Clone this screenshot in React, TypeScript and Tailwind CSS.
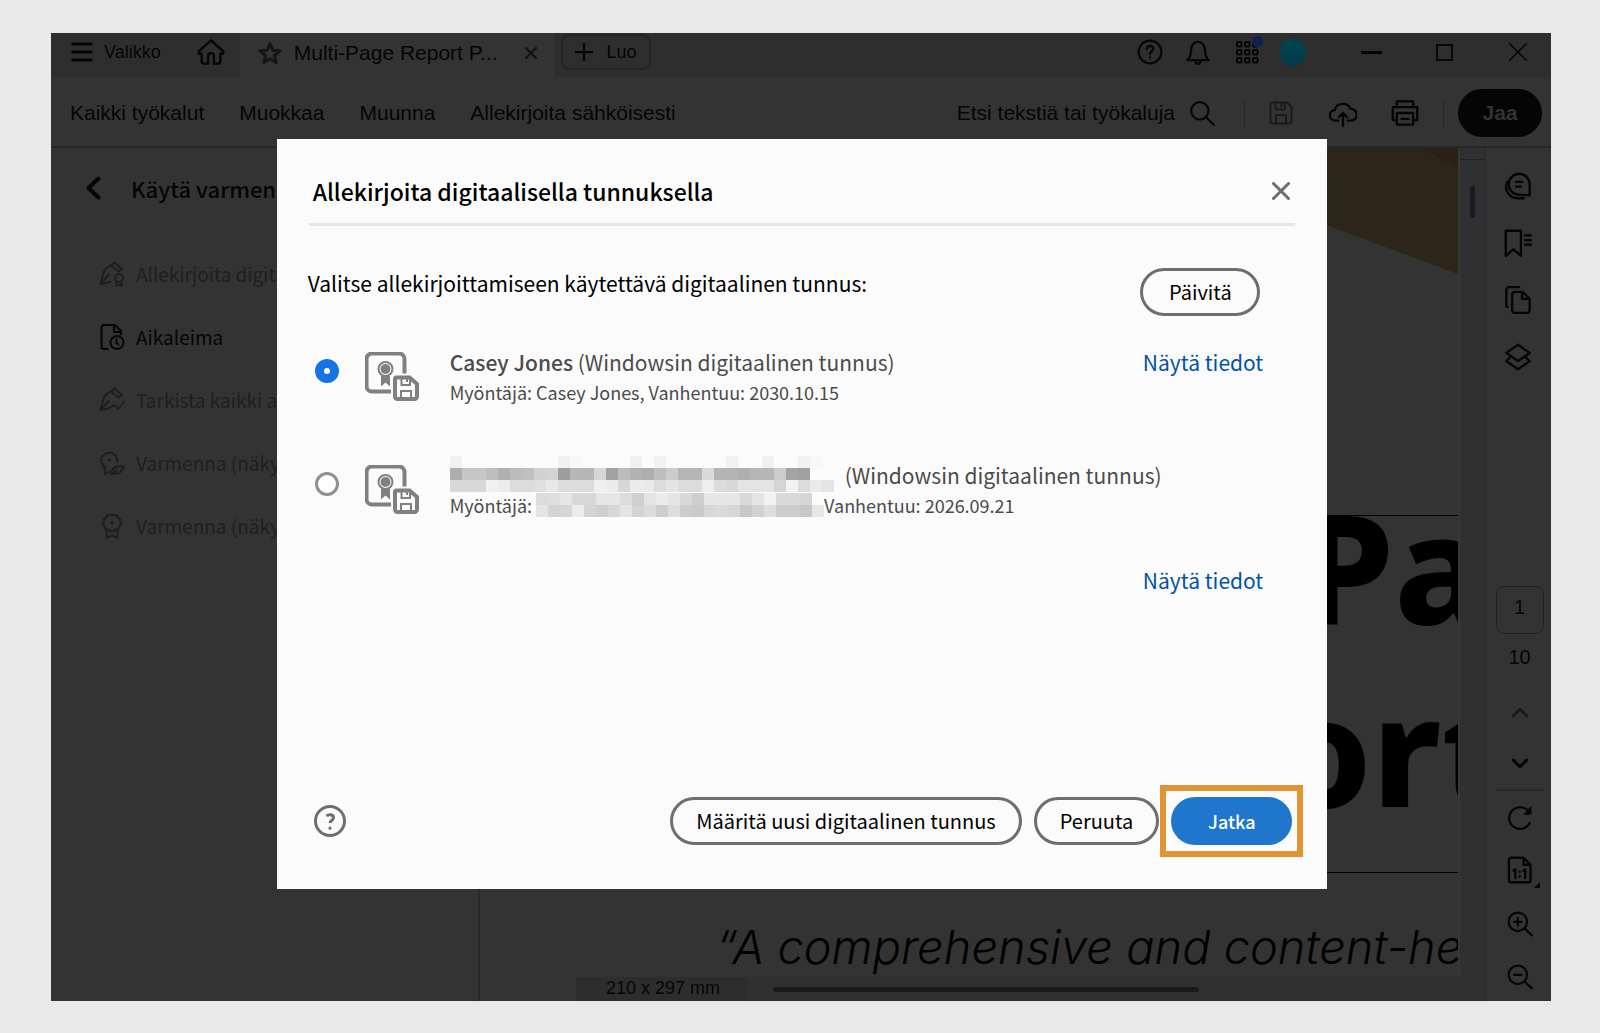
import React from "react";
import clsx from "clsx";

// ─── Icons ───────────────────────────────────────────────────

interface IconProps {
  className?: string;
  width?: number;
  box?: number;
  children: React.ReactNode;
}

function Icon({ className, width = 2, box = 24, children }: IconProps) {
  return (
    <svg
      viewBox={`0 0 ${box} ${box}`}
      fill="none"
      stroke="currentColor"
      strokeWidth={width}
      strokeLinecap="round"
      strokeLinejoin="round"
      aria-hidden="true"
      className={clsx("shrink-0", className)}
    >
      {children}
    </svg>
  );
}

const penBody = (
  <>
    <path d="M12 4.500 15.500 1.500 23 8l-3 2.500z" />
    <path d="M12 4.500C8 6 5.500 8 4.500 12L1.500 22.500" />
    <path d="M1.500 23 9.500 14" />
  </>
);

function SignIcon() {
  return (
    <Icon box={26} className="size-[26px]">
      {penBody}
      <path d="M1.500 23 11.500 21" />
      <circle cx="20" cy="17" r="4" />
      <path d="M17.500 20.500v4.500l2.500-1.500 2.500 1.500v-4.500" />
    </Icon>
  );
}

function TimestampIcon() {
  return (
    <Icon box={26} className="size-[26px]">
      <path d="M8.500 25H5a2.500 2.500 0 0 1-2.500-2.500v-19A2.500 2.500 0 0 1 5 1h11l6 6v3.500" />
      <path d="M15 1.500V8h6.500" />
      <circle cx="18" cy="18.500" r="6.500" />
      <path d="M17.500 15v4l2 1.500" />
    </Icon>
  );
}

function VerifyIcon() {
  return (
    <Icon box={26} className="size-[26px]">
      {penBody}
      <path d="M1.500 23c6-.5 10-1.500 12.500-4.500" />
      <path d="m15.500 18.500 3.500 3.500 6-7.500" />
    </Icon>
  );
}

function CertifyVisibleIcon() {
  return (
    <Icon box={26} className="size-[26px]">
      <path d="M6 17.500c-2 0-2.500-2-2-3.500-2-.5-2.500-3-1-4.500C1.500 7.500 3 5.500 5 5.500 5.500 3 8 2.500 9.500 3.500 11.500 1.500 14 2.500 14.500 4.500c2.500 0 3.500 2 2.500 4 1.500.500 2 2.500 1 3.500" />
      <path d="M6 16v8l4.500-2" />
      <circle cx="10.500" cy="10" r="1.500" fill="currentColor" stroke="none" />
      <path d="M12.500 23.500c0-5 4.500-8 12.500-7.500-1.500 5-5.500 9-10.500 7.500z" />
      <path d="m12.500 24.500 5.500-4.500" />
    </Icon>
  );
}

function CertifyIcon() {
  return (
    <Icon box={26} className="size-[26px]">
      <path d="M13 1.500l2.400 1.200 2.700-.2 1.100 2.400 2.200 1.500-.2 2.700 1 2.400-1.800 2-.8 2.500-2.700.5-2 1.700-1.900-.9-1.900.9-2-1.700-2.700-.5-.8-2.500-1.800-2 1-2.400-.2-2.700 2.200-1.500 1.100-2.400 2.700.2z" />
      <path d="M7.500 18v7l5.500-2.500 5.500 2.500v-7" />
      <circle cx="13" cy="10" r="2" fill="currentColor" stroke="none" />
    </Icon>
  );
}

function SaveIcon({ className }: { className?: string }) {
  return (
    <Icon className={className}>
      <path d="M3.500 1.500H18L22.500 6v14a2.500 2.500 0 0 1-2.500 2.500H4A2.500 2.500 0 0 1 1.500 20V3.500a2 2 0 0 1 2-2z" />
      <path d="M6.500 1.500V8.500h9.500v-7" />
      <path d="M12.500 3.500v2" />
      <path d="M7 22v-8h10v8" />
    </Icon>
  );
}

function DigitalIdIcon() {
  return (
    <svg viewBox="0 0 54 49" aria-hidden="true" className="h-[49px] w-[54px] shrink-0">
      <g fill="none" stroke="#808080">
        <path
          d="M26 39.500H7A5.500 5.500 0 0 1 1.500 34V7A5.500 5.500 0 0 1 7 1.500h27A5.500 5.500 0 0 1 39.500 7v14.500"
          strokeWidth="4"
        />
        <circle cx="20.500" cy="17" r="7" strokeWidth="2" />
        <path
          d="M31.500 25.500h13L52 32v12.500a2.500 2.500 0 0 1-2.500 2.500H32.500a2.500 2.500 0 0 1-2.500-2.500v-17.500a1.500 1.500 0 0 1 1.500-1.500z"
          strokeWidth="4"
        />
        <path d="M36.500 25v8h8.500v-8M36 46.500v-7.500h10v7.500" strokeWidth="2" />
        <path d="M42 26v4" strokeWidth="2" />
      </g>
      <circle cx="20.500" cy="17" r="5" fill="#808080" />
      <path d="M16 24h9v10.500l-4.500-4-4.500 4z" fill="#808080" />
    </svg>
  );
}

// ─── Data ────────────────────────────────────────────────────

const menuItems = ["Kaikki työkalut", "Muokkaa", "Muunna", "Allekirjoita sähköisesti"];

const tools = [
  { label: "Allekirjoita digitaalisesti", icon: <SignIcon />, enabled: false },
  { label: "Aikaleima", icon: <TimestampIcon />, enabled: true },
  { label: "Tarkista kaikki allekirjoitukset", icon: <VerifyIcon />, enabled: false },
  { label: "Varmenna (näkyvä allekirjoitus)", icon: <CertifyVisibleIcon />, enabled: false },
  { label: "Varmenna (näkymätön allekirjoitus)", icon: <CertifyIcon />, enabled: false },
];

// Grey levels of the pixelated name and issuer, one row of 12px cells per array
const nameCells = [
  "f0 fb fb fb fb fb fb fb fb f0 f8 fb fb fb fb f0 fb f2 fb fb fb fb fb f2 fb fb f0 fb fb f2 f8 fb".split(" "),
  "ae c6 c6 be b0 bc c0 d2 d4 9e b6 b6 d6 a2 bc b2 ae be cc b6 b6 da b4 b4 b0 b6 b6 cc a4 a0 fb fb".split(" "),
  "d8 d8 d8 f0 ec dc dc e0 e8 dc dc dc f0 ec d8 ec ea dc e4 dc dc ee dc d8 e4 e4 e4 d4 f2 dc ea e4".split(" "),
];

const issuerCells = [
  "dc de e6 d8 d8 e6 e6 dc cf e4 ec e4 d8 ce e6 e6 e6 da e4 f2 da da d6 fb".split(" "),
  "e4 d4 d6 ec d4 cf d8 e4 d4 dc ce de cc ca d8 da d8 c8 d2 de cc cc c8 e8".split(" "),
];

function Redacted({ rows, label }: { rows: string[][]; label: string }) {
  return (
    <span role="img" aria-label={label} className="flex flex-col">
      {rows.map((row, i) => (
        <span key={i} className="flex">
          {row.map((level, j) => (
            <span
              key={j}
              className="block h-3 w-3"
              style={{ backgroundColor: `#${level}${level}${level}` }}
            />
          ))}
        </span>
      ))}
    </span>
  );
}

// ─── Window chrome ───────────────────────────────────────────

function TabBar() {
  return (
    <header className="flex h-11 shrink-0 items-center bg-[#2e2e2e] pb-1.5">
      <button className="ml-[19px] flex items-center gap-[10px] text-lg leading-6">
        <Icon width={3} className="size-6">
          <path d="M1.500 4h21M1.500 12h21M1.500 20h21" strokeLinecap="butt" />
        </Icon>
        Valikko
      </button>
      <button className="ml-9" aria-label="Koti">
        <Icon width={2} className="size-7">
          <path d="M12 2 1.500 11.500v2H4V20a2 2 0 0 0 2 2h3.500v-6.500a2.500 2.500 0 0 1 5 0V22H18a2 2 0 0 0 2-2v-6.500h2.500v-2z" />
        </Icon>
      </button>
      <div className="ml-[15px] flex h-11 items-center self-start bg-[#333] pr-[18px] pb-1 pl-[18px]">
        <Icon width={3} className="size-6 text-[#151515]">
          <path d="m12 2.500 2.800 6.700 7.200.6-5.500 4.700 1.700 7L12 17.700 5.800 21.500l1.700-7L2 9.800l7.200-.6z" />
        </Icon>
        <span className="ml-3 text-[21px] leading-6">Multi-Page Report P...</span>
        <button className="ml-[27px]" aria-label="Sulje välilehti">
          <Icon width={4} className="size-3 text-[#111]">
            <path d="m2 2 20 20M22 2 2 22" />
          </Icon>
        </button>
      </div>
      <button className="ml-1.5 flex h-9 items-center gap-[14px] rounded-lg border-2 border-[#262626] px-3 text-lg leading-6">
        <Icon width={3} className="size-[18px]">
          <path d="M12 1v22M1 12h22" />
        </Icon>
        Luo
      </button>
      <div className="ml-auto flex items-center">
        <button aria-label="Ohje">
          <Icon className="size-[26px]">
            <circle cx="12" cy="12" r="10.500" />
            <path d="M9 9.500c0-4 6-3.500 6-.5 0 2-3 2.500-3 5" />
            <path d="M12 17v.3" />
          </Icon>
        </button>
        <button className="ml-[22px]" aria-label="Ilmoitukset">
          <Icon className="size-[26px]">
            <path d="M2 19.500c3-2.500 3.500-5 3.500-9a6.500 8 0 0 1 13 0c0 4 .5 6.500 3.500 9z" />
            <path d="M9.500 20.500c.5 3 4.500 3 5 0" />
          </Icon>
        </button>
        <button className="relative ml-6" aria-label="Sovellukset">
          <Icon width={2} className="size-6">
            {[4, 12, 20].map((y) =>
              [4, 12, 20].map((x) => (
                <rect key={`${x}-${y}`} x={x - 2} y={y - 2} width="4.500" height="4.500" rx="1" />
              ))
            )}
          </Icon>
          <span className="absolute -top-1 -right-1 size-[11px] rounded-full bg-[#0c2352]" />
        </button>
        <span className="ml-5 size-[27px] rounded-full bg-linear-to-b from-[#00454f] to-[#003a4a]" />
        <button className="ml-[55px]" aria-label="Pienennä">
          <span className="block h-[3px] w-[21px] bg-[#050505]" />
        </button>
        <button className="ml-[54px]" aria-label="Suurenna">
          <span className="block size-[17px] border-2 border-[#080808]" />
        </button>
        <button className="mr-6 ml-14" aria-label="Sulje">
          <Icon width={2} className="size-[18px]">
            <path d="m1 1 22 22M23 1 1 23" />
          </Icon>
        </button>
      </div>
    </header>
  );
}

function Toolbar() {
  return (
    <nav className="flex h-[71px] shrink-0 items-center border-b-2 border-[#282828] pt-0.5 text-[21px] leading-6">
      <div className="ml-[19px] flex gap-[35px]">
        {menuItems.map((item) => (
          <button key={item}>{item}</button>
        ))}
      </div>
      <button className="ml-auto flex items-center gap-[14px]">
        Etsi tekstiä tai työkaluja
        <Icon width={2} className="size-[26px]">
          <circle cx="10" cy="10" r="8" />
          <path d="m16 16 7 7" />
        </Icon>
      </button>
      <span className="ml-[29px] h-7 w-px bg-[#262626]" />
      <button className="ml-6 text-[#1a1a1a]" aria-label="Tallenna">
        <SaveIcon className="size-6" />
      </button>
      <button className="ml-9" aria-label="Lataa pilveen">
        <Icon className="size-7">
          <path d="M8 18.500H5.500a4.500 4.500 0 0 1-.5-9 7 6.500 0 0 1 13.500-1 5 5 0 0 1 .5 10H16" />
          <path d="M12 23V12M8.500 15.500 12 12l3.500 3.500" />
        </Icon>
      </button>
      <button className="ml-[34px]" aria-label="Tulosta">
        <Icon className="size-7">
          <path d="M5 7V2h14v5" />
          <path d="M5 18H1.500V7h21v11H19" />
          <path d="M5 12h14v10H5zM9 17h6" />
        </Icon>
      </button>
      <span className="ml-6 h-7 w-px bg-[#262626]" />
      <button className="mr-[9px] ml-[14px] h-12 w-[84px] rounded-full bg-[#050505] font-bold text-[#333]">
        Jaa
      </button>
    </nav>
  );
}

function ToolsPanel() {
  return (
    <aside className="w-[429px] shrink-0 border-r-2 border-[#282828] font-['Noto_Sans_CJK_SC',sans-serif]">
      <div className="mt-6 ml-8 flex h-8 items-center">
        <button aria-label="Takaisin">
          <Icon width={4} className="size-6">
            <path d="M15.500 2.500 5.500 12l10 9.500" />
          </Icon>
        </button>
        <h2 className="ml-6 text-[22px] leading-8 font-medium whitespace-nowrap">Käytä varmennetta</h2>
      </div>
      <ul className="mt-[38px]">
        {tools.map((tool) => (
          <li key={tool.label}>
            <button
              disabled={!tool.enabled}
              className={clsx(
                "ml-12 flex h-[63px] items-center gap-[11px] text-[19px] leading-6 whitespace-nowrap",
                tool.enabled ? "text-[#050505]" : "text-[#1f1f1f]"
              )}
            >
              {tool.icon}
              {tool.label}
            </button>
          </li>
        ))}
      </ul>
    </aside>
  );
}

function DocumentView() {
  return (
    <main className="flex min-w-0 flex-1 flex-col pl-24">
      <div className="flex min-h-0 flex-1">
        <div className="flex flex-1 flex-col overflow-hidden">
          <svg viewBox="0 0 882 130" aria-hidden="true" className="w-full shrink-0">
            <path d="M0 0h882v126L750 77 500 0z" fill="#2b2619" />
            <path d="M846 0h36v21z" fill="#2b2013" />
          </svg>
          <div className="mt-[237px] h-[358px] shrink-0 border-y border-black font-['Noto_Sans',sans-serif] text-[152px] leading-[183px] font-extrabold whitespace-nowrap text-black">
            <div className="-mt-[42px] pl-[723px]">Pa</div>
            <div className="pl-[700px]">ort</div>
          </div>
          <p className="mt-11 pl-[140px] font-['Inter',sans-serif] text-[47px] leading-[60px] font-light whitespace-nowrap text-black italic">
            “A comprehensive and content-he
          </p>
        </div>
        <div className="w-[27px] shrink-0 border-l-2 border-[#373737] bg-[#303032]">
          <div className="h-3 border-b border-[#222]" />
          <div className="mx-auto mt-[26px] h-8 w-[5px] rounded-full bg-[#1b1b1f]" />
        </div>
      </div>
      <div className="flex h-6 shrink-0 items-center bg-[#303030]">
        <span className="h-6 w-[171px] bg-[#2d2d2d] pl-[30px] text-lg leading-[22px]">210 x 297 mm</span>
        <span className="ml-[26px] h-[5px] w-[426px] rounded-full bg-[#1a1a1a]" />
      </div>
    </main>
  );
}

function SideRail() {
  return (
    <aside className="flex w-[66px] shrink-0 flex-col items-center border-l border-[#282828] pl-0.5">
      <div className="mt-6 mr-[3px] flex flex-col gap-[29px]">
        <button aria-label="Kommentit">
          <Icon className="size-7">
            <path d="M22 20V10.500a9 9 0 1 0-9 9z" />
            <path d="M3 8.500c-3 5 0 14 9 14h5M10.500 8.500h5M10.500 12.500h4" />
          </Icon>
        </button>
        <button aria-label="Kirjanmerkit">
          <Icon className="size-7">
            <path d="M1.500 1.500h13V23L8 17.500 1.500 23z" />
            <path d="M18 5.500h5M18 9.500h5M18 13.500h5" />
          </Icon>
        </button>
        <button aria-label="Sivut">
          <Icon className="size-7">
            <path d="M3 18a1 1 0 0 1-1-1V3.500A2.500 2.500 0 0 1 4.500 1H13" />
            <path d="M16 5H9.500A2.500 2.500 0 0 0 7 7.500v13A2.500 2.500 0 0 0 9.500 23h10a2.500 2.500 0 0 0 2.500-2.500V11zM15.500 5.500V11H21.500" />
          </Icon>
        </button>
        <button aria-label="Tasot">
          <Icon className="size-7">
            <path d="m12 1.500 10 7-10 7-10-7z" />
            <path d="m5 12.500-3 3 10 7 10-7-3-3" />
          </Icon>
        </button>
      </div>
      <div className="mt-auto mb-[11px] flex flex-col items-center text-xl leading-6">
        <input
          aria-label="Sivunumero"
          defaultValue="1"
          className="size-12 rounded-lg border border-[#222] bg-transparent pb-1.5 text-center"
        />
        <span className="mt-[11px]">10</span>
        <button className="mt-8" aria-label="Edellinen sivu">
          <Icon width={4} className="h-6 w-[18px] text-[#1a1a1a]">
            <path d="m3 16 9-9 9 9" />
          </Icon>
        </button>
        <button className="mt-[26px]" aria-label="Seuraava sivu">
          <Icon width={4} className="h-6 w-[18px]">
            <path d="m3 8 9 9 9-9" />
          </Icon>
        </button>
        <span className="mt-[14px] h-0.5 w-12 bg-[#282828]" />
        <button className="mt-[14px]" aria-label="Kierrä">
          <Icon className="size-[26px]">
            <path d="M21 16.500A10 10 0 1 1 20 6" />
            <path d="M22 2v6.500h-6z" fill="currentColor" strokeWidth="1" />
          </Icon>
        </button>
        <button className="relative mt-[25px]" aria-label="Todellinen koko">
          <Icon className="size-7">
            <path d="M4.500 1.500H15L21 7.500v13a2 2 0 0 1-2 2H4.500a2 2 0 0 1-2-2v-17a2 2 0 0 1 2-2zM15 2v5.500h6" />
            <path d="m6.500 12.500 1.500-1v7.500M15 12.500l1.500-1v7.500M11.700 13.500v.2M11.700 17.500v.2" />
          </Icon>
          <svg viewBox="0 0 6 6" aria-hidden="true" className="absolute -right-1.5 -bottom-1 size-1.5">
            <path d="M6 0v6H0z" fill="#050505" />
          </svg>
        </button>
        <button className="mt-[27px]" aria-label="Lähennä">
          <Icon className="size-[26px]">
            <circle cx="10" cy="10" r="8.500" />
            <path d="m16.500 16.500 6.500 6M10 6.500v7M6.500 10h7" />
          </Icon>
        </button>
        <button className="mt-[27px]" aria-label="Loitonna">
          <Icon className="size-[26px]">
            <circle cx="10" cy="10" r="8.500" />
            <path d="m16.500 16.500 6.500 6M6.500 10h7" />
          </Icon>
        </button>
      </div>
    </aside>
  );
}

// ─── Dialog ──────────────────────────────────────────────────

const outlineButton =
  "h-12 rounded-full border-3 border-[#6e6e6e] px-[23px] text-[20px] leading-6 whitespace-nowrap text-black";

const radio =
  "size-6 shrink-0 appearance-none rounded-full border-3 border-[#909090] bg-white checked:border-9 checked:border-[#1473e6]";

function SignDialog() {
  return (
    <div
      role="dialog"
      aria-labelledby="dialog-title"
      className="flex h-[750px] w-[calc(70%+2px)] flex-col bg-[#fbfbfb] px-8 font-['Noto_Sans_CJK_SC',sans-serif] text-[#4b4b4b]"
    >
      <div className="flex h-[87px] shrink-0 items-center justify-between border-b-3 border-[#e6e6e6] pt-5 pr-[5px] pl-1">
        <h1 id="dialog-title" className="text-[23px] leading-8 font-medium text-black">
          Allekirjoita digitaalisella tunnuksella
        </h1>
        <button aria-label="Sulje" className="text-[#6e6e6e]">
          <Icon width={4} className="size-[18px]">
            <path d="m2 2 20 20M22 2 2 22" />
          </Icon>
        </button>
      </div>

      <div className="mt-[42px] flex items-start justify-between pr-[35px]">
        <p className="-ml-px text-[21px] leading-[30px] text-black">
          Valitse allekirjoittamiseen käytettävä digitaalinen tunnus:
        </p>
        <button className={clsx(outlineButton, "w-[120px]")}>Päivitä</button>
      </div>

      {/* Digital IDs */}
      <div className="mt-[31px] flex flex-wrap items-start justify-between pr-8 pl-1.5">
        <label className="flex h-[113px] items-start">
          <input type="radio" name="digital-id" defaultChecked className={clsx(radio, "mt-3")} />
          <span className="mt-[5px] ml-[26px]">
            <DigitalIdIcon />
          </span>
          <span className="ml-[31px] block">
            <span className="block text-[21px] leading-[30px]">
              <b className="font-medium">Casey Jones</b> (Windowsin digitaalinen tunnus)
            </span>
            <span className="block text-[18px] leading-[30px]">
              Myöntäjä: Casey Jones, Vanhentuu: 2030.10.15
            </span>
          </span>
        </label>
        <a href="#details-1" className="text-[21px] leading-[30px] text-[#0054a6]">
          Näytä tiedot
        </a>
        <label className="flex h-[105px] w-full items-start">
          <input type="radio" name="digital-id" className={clsx(radio, "mt-3")} />
          <span className="mt-[5px] ml-[26px]">
            <DigitalIdIcon />
          </span>
          <span className="-mt-1 ml-[31px] block">
            <span className="flex h-9 items-center gap-[11px]">
              <Redacted rows={nameCells} label="Nimi piilotettu" />
              <span className="pt-0.5 text-[21px] leading-[30px] whitespace-nowrap">
                (Windowsin digitaalinen tunnus)
              </span>
            </span>
            <span className="flex items-center text-[18px] leading-[26px] whitespace-nowrap">
              <span className="mr-1">Myöntäjä:</span>
              <Redacted rows={issuerCells} label="Myöntäjä piilotettu" />
              Vanhentuu: 2026.09.21
            </span>
          </span>
        </label>
        <a href="#details-2" className="ml-auto text-[21px] leading-[30px] text-[#0054a6]">
          Näytä tiedot
        </a>
      </div>

      {/* Footer */}
      <div className="mt-auto mb-8 flex items-center">
        <button aria-label="Ohje" className="ml-[5px] text-[#6e6e6e]">
          <Icon box={32} width={3} className="size-8">
            <circle cx="16" cy="16" r="14.500" />
            <path d="M12.500 11c2-2 7-2 7 1.500 0 3-3.500 3-3.500 5.500" strokeLinecap="butt" />
            <path d="M16 23v.2" />
          </Icon>
        </button>
        <button className={clsx(outlineButton, "ml-auto")}>Määritä uusi digitaalinen tunnus</button>
        <button className={clsx(outlineButton, "ml-3")}>Peruuta</button>
        <div className="-mr-2 ml-px border-6 border-[#e09535] px-[5px] py-1.5">
          <button className="block h-12 w-[121px] rounded-full bg-[#2075cc] text-[18px] leading-6 font-medium text-white">
            Jatka
          </button>
        </div>
      </div>
    </div>
  );
}

// ─── App ─────────────────────────────────────────────────────

export default function App() {
  return (
    <div className="flex min-h-screen flex-col bg-[#e9e9e9] pt-[33px] pr-[49px] pb-8 pl-[51px] font-['Liberation_Sans',Arial,sans-serif]">
      <div className="relative flex flex-1 flex-col overflow-hidden bg-[#333] text-[#050505]">
        <TabBar />
        <Toolbar />
        <div className="flex flex-1">
          <ToolsPanel />
          <DocumentView />
          <SideRail />
        </div>
        <div className="absolute inset-0 flex items-start justify-center pt-[106px] pl-0.5">
          <SignDialog />
        </div>
      </div>
    </div>
  );
}
